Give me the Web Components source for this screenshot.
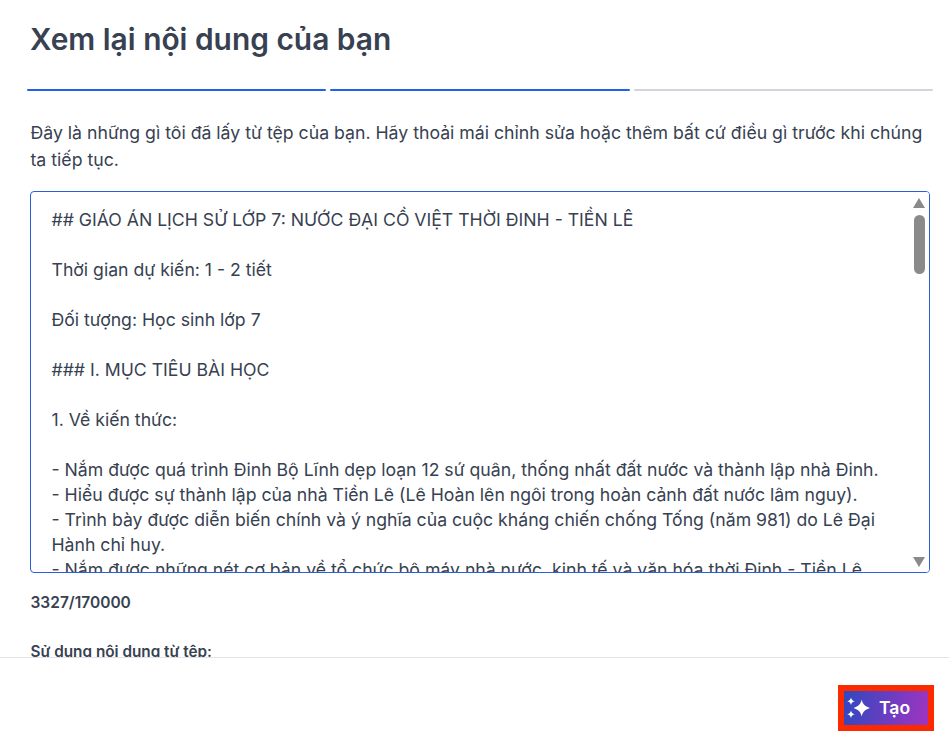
<!DOCTYPE html>
<html lang="vi">
<head>
<meta charset="utf-8">
<title>Xem lại nội dung của bạn</title>
<style>
html,body{margin:0;padding:0;background:#fff;height:733px;overflow:hidden}
body{font-family:Inter,"Noto Sans",sans-serif;color:#374151}
</style>
</head>
<body>
<review-page>
  <span slot="title">Xem lại nội dung của bạn</span>
  <step-bar slot="steps"></step-bar>
  <span slot="desc">Đây là những gì tôi đã lấy từ tệp của bạn. Hãy thoải mái chỉnh sửa hoặc thêm bất cứ điều gì trước khi chúng ta tiếp tục.</span>
  <text-box slot="box">
    <p>## GIÁO ÁN LỊCH SỬ LỚP 7: NƯỚC ĐẠI CỒ VIỆT THỜI ĐINH - TIỀN LÊ</p>
    <p class="gap">Thời gian dự kiến: 1 - 2 tiết</p>
    <p class="gap">Đối tượng: Học sinh lớp 7</p>
    <p class="gap">### I. MỤC TIÊU BÀI HỌC</p>
    <p class="gap">1. Về kiến thức:</p>
    <p class="gap">- Nắm được quá trình Đinh Bộ Lĩnh dẹp loạn 12 sứ quân, thống nhất đất nước và thành lập nhà Đinh.</p>
    <p>- Hiểu được sự thành lập của nhà Tiền Lê (Lê Hoàn lên ngôi trong hoàn cảnh đất nước lâm nguy).</p>
    <p>- Trình bày được diễn biến chính và ý nghĩa của cuộc kháng chiến chống Tống (năm 981) do Lê Đại Hành chỉ huy.</p>
    <p>- Nắm được những nét cơ bản về tổ chức bộ máy nhà nước, kinh tế và văn hóa thời Đinh - Tiền Lê.</p>
  </text-box>
  <span slot="count">3327/170000</span>
  <span slot="source">Sử dụng nội dung từ tệp:</span>
  <magic-button slot="action">Tạo</magic-button>
</review-page>
<script>
function def(name, html){
  customElements.define(name, class extends HTMLElement{
    constructor(){super();this.attachShadow({mode:'open'}).innerHTML=html;}
  });
}
def('review-page',`<style>
:host{display:flex;flex-direction:column;height:733px;overflow:hidden;font-family:Inter,"Noto Sans",sans-serif;color:#374151}
.main{height:657px;overflow:hidden;flex:none;box-sizing:border-box;padding:19px 16px 0 27px}
h1{margin:0 0 0 3px;font-size:29.9px;line-height:40px;font-weight:600;color:#374151;letter-spacing:0}
.steps{margin-top:30px}
.desc{margin:28px 0 0 3.5px;font-size:17.68px;line-height:27px;color:#374151;font-weight:400;height:54px}
.box{margin:18px 3px 0 3px}
.count{margin:20px 0 0 3.5px;font-size:15.5px;line-height:20px;font-weight:600;color:#374151}
.source{margin:29px 0 0 3.5px;font-size:15.3px;line-height:20px;font-weight:600;color:#374151}
footer{flex:none;box-sizing:border-box;height:76px;border-top:1px solid #e1e3e6;display:flex;justify-content:flex-end;align-items:flex-start;padding:27px 15px 0 0;background:#fff}
</style>
<div class="main">
<h1><slot name="title"></slot></h1>
<div class="steps"><slot name="steps"></slot></div>
<div class="desc"><slot name="desc"></slot></div>
<div class="box"><slot name="box"></slot></div>
<div class="count"><slot name="count"></slot></div>
<div class="source"><slot name="source"></slot></div>
</div>
<footer><slot name="action"></slot></footer>`);
def('step-bar',`<style>
:host{display:grid;grid-template-columns:repeat(3,1fr);column-gap:4px;height:2px}
i{display:block;height:2px;background:#2160e8;border-radius:1px}
i:last-child{background:#d1d5db}
</style><i></i><i></i><i></i>`);
def('text-box',`<style>
:host{display:block;position:relative;box-sizing:border-box;height:382px;border:1px solid #2a5fd8;border-radius:4px;overflow:hidden;background:#fff}
.text{box-sizing:border-box;height:100%;overflow:hidden;padding:15px 28px 0 20.5px;font-size:17.65px;line-height:25px;color:#374151}
::slotted(p){margin:0}
::slotted(p.gap){margin-top:25px}
.sb{position:absolute;top:0;right:0;bottom:0;width:17px;background:#fff}
.up,.down{position:absolute;left:1px;width:0;height:0;border-left:6.5px solid transparent;border-right:6.5px solid transparent}
.up{top:6px;border-bottom:10px solid #8a8a8a}
.down{bottom:5px;border-top:10px solid #8a8a8a}
.th{position:absolute;top:23px;left:2px;width:11px;height:59px;border-radius:5.5px;background:#8a8a8a}
</style>
<div class="text"><slot></slot></div>
<div class="sb"><div class="up"></div><div class="th"></div><div class="down"></div></div>`);
def('magic-button',`<style>
:host{display:inline-flex;box-sizing:border-box;width:96px;height:46px;border:6px solid #fb2a00;background:linear-gradient(100deg,#2f48c0,#a034c0);color:#fff;font:600 17.6px/34px Inter,"Noto Sans",sans-serif;align-items:center;gap:9px;padding-left:2px}
svg{width:24px;height:24px;flex:none}
</style>
<svg viewBox="0 0 24 24" fill="#fff"><path d="M15.7 3.5 C16.8 8.2 18.6 10.2 24 12 C18.6 13.8 16.8 15.8 15.7 20.5 C14.6 15.8 12.8 13.8 7.5 12 C12.8 10.2 14.6 8.2 15.7 3.5Z"/><path d="M5 1.5 C5.6 3.9 6.4 4.6 8.8 5.2 C6.4 5.8 5.6 6.5 5 9 C4.4 6.5 3.6 5.8 1.2 5.2 C3.6 4.6 4.4 3.9 5 1.5Z"/><path d="M5 14.5 C5.6 16.9 6.4 17.6 8.8 18.2 C6.4 18.8 5.6 19.5 5 22 C4.4 19.5 3.6 18.8 1.2 18.2 C3.6 17.6 4.4 16.9 5 14.5Z"/></svg>
<span><slot></slot></span>`);
</script>
</body>
</html>
